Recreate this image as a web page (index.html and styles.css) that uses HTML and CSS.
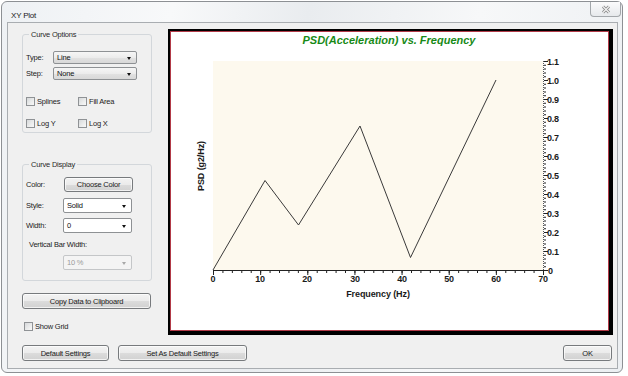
FILE: index.html
```html
<!DOCTYPE html>
<html>
<head>
<meta charset="utf-8">
<title>XY Plot</title>
<link rel="stylesheet" href="styles.css">
</head>
<body>
<div class="window">
  <div class="titlebar">
    <span class="title">XY Plot</span>
    <div class="close">
      <svg width="10" height="9" viewBox="0 0 10 9">
        <path d="M2 1.5 L8 7.5 M8 1.5 L2 7.5" stroke="#8a8a8a" stroke-width="3" fill="none"/>
        <path d="M2 1.5 L8 7.5 M8 1.5 L2 7.5" stroke="#f4f4f4" stroke-width="1.1" fill="none"/>
      </svg>
    </div>
  </div>
  <div class="client">
    <div class="main">
      <div class="left">
        <fieldset class="group g1">
          <legend>Curve Options</legend>
          <div class="row">
            <span class="lbl w27">Type:</span>
            <div class="combo dd w84"><span>Line</span><i class="arrow"></i></div>
          </div>
          <div class="row mt3">
            <span class="lbl w27">Step:</span>
            <div class="combo dd w84"><span>None</span><i class="arrow"></i></div>
          </div>
          <div class="row mt17">
            <label class="check w52"><i class="box"></i>Splines</label>
            <label class="check"><i class="box"></i>Fill Area</label>
          </div>
          <div class="row mt13">
            <label class="check w52"><i class="box"></i>Log Y</label>
            <label class="check"><i class="box"></i>Log X</label>
          </div>
        </fieldset>
        <fieldset class="group g2">
          <legend>Curve Display</legend>
          <div class="row">
            <span class="lbl w38">Color:</span>
            <button class="btn choose">Choose Color</button>
          </div>
          <div class="row mt6">
            <span class="lbl w37">Style:</span>
            <div class="combo tall w69"><span>Solid</span><i class="arrow"></i></div>
          </div>
          <div class="row mt5">
            <span class="lbl w37">Width:</span>
            <div class="combo tall w69"><span>0</span><i class="arrow"></i></div>
          </div>
          <div class="vbw">Vertical Bar Width:</div>
          <div class="row mt6">
            <span class="lbl w37"></span>
            <div class="combo tall w69 disabled"><span>10 %</span><i class="arrow"></i></div>
          </div>
        </fieldset>
        <button class="btn copy">Copy Data to Clipboard</button>
        <label class="check grid"><i class="box"></i>Show Grid</label>
      </div>
      <div class="chart">
        <div class="chart-inner">
          <svg class="plot" width="437" height="298" viewBox="171 32 437 298">
            <rect x="171" y="32" width="437" height="298" fill="#ffffff"/>
            <rect x="213" y="61" width="330" height="209" fill="#fdf9ee"/>
            <text x="389" y="44" class="ttl" text-anchor="middle">PSD(Acceleration) vs. Frequency</text>
            <!-- x axis -->
            <line x1="213" y1="270.5" x2="544" y2="270.5" stroke="#222" stroke-width="1"/>
            <line x1="213" y1="272" x2="544" y2="272" stroke="#222" stroke-width="2" stroke-dasharray="1 8.4286"/>
            <line x1="213" y1="273" x2="544" y2="273" stroke="#222" stroke-width="4" stroke-dasharray="1 46.143"/>
            <!-- y axis -->
            <line x1="543.5" y1="61" x2="543.5" y2="271" stroke="#555" stroke-width="1" stroke-dasharray="1 1"/>
            <line x1="545" y1="271" x2="545" y2="60" stroke="#222" stroke-width="2" stroke-dasharray="1 2.8"/>
            <line x1="546" y1="271" x2="546" y2="60" stroke="#222" stroke-width="4" stroke-dasharray="1 18"/>
            <g class="tick" text-anchor="middle">
              <text x="213" y="282">0</text>
              <text x="260" y="282">10</text>
              <text x="307" y="282">20</text>
              <text x="355" y="282">30</text>
              <text x="402" y="282">40</text>
              <text x="449" y="282">50</text>
              <text x="496" y="282">60</text>
              <text x="543" y="282">70</text>
            </g>
            <g class="tick">
              <text x="548" y="273.5">0</text>
              <text x="547" y="254.5">0.1</text>
              <text x="547" y="235.5">0.2</text>
              <text x="547" y="216.5">0.3</text>
              <text x="547" y="197.5">0.4</text>
              <text x="547" y="178.5">0.5</text>
              <text x="547" y="159.5">0.6</text>
              <text x="547" y="140.5">0.7</text>
              <text x="547" y="121.5">0.8</text>
              <text x="547" y="102.5">0.9</text>
              <text x="547" y="83.5">1.0</text>
              <text x="547" y="64.5">1.1</text>
            </g>
            <text x="378" y="297" class="axl" text-anchor="middle">Frequency (Hz)</text>
            <text class="axl" text-anchor="middle" transform="translate(204 166) rotate(-90)">PSD (g2/Hz)</text>
            <polyline points="213,270 265,180.5 298.5,225 360,126 410.5,257.5 496,80" fill="none" stroke="#3a3a3a" stroke-width="1"/>
          </svg>
        </div>
      </div>
    </div>
    <div class="bottom">
      <button class="btn defset">Default Settings</button>
      <button class="btn setdef">Set As Default Settings</button>
      <button class="btn ok">OK</button>
    </div>
  </div>
</div>
</body>
</html>
```
FILE: styles.css
```css
* { box-sizing: border-box; }
html, body { margin: 0; padding: 0; background: #ffffff; }
body {
  width: 628px; height: 376px; overflow: hidden;
  font-family: "Liberation Sans", Arial, sans-serif;
  font-size: 7.5px; letter-spacing: -0.2px; color: #1c1c1c;
}
.window {
  margin: 1px 0 0 1px;
  width: 622px; height: 372px;
  border: 1px solid #8d9094;
  border-radius: 6px;
  background: linear-gradient(100deg, #eef1f4 0%, #f8f9fa 25%, #e9ecef 45%, #f7f8f9 70%, #eceff2 100%);
  padding: 0 4px 3px 5px;
  display: flex; flex-direction: column;
}
.titlebar {
  height: 20px;
  display: flex; justify-content: space-between; align-items: flex-start;
  margin-right: -4px;
}
.title { font-size: 8px; padding: 9px 0 0 4px; color: #1a1a1a; }
.close {
  width: 31px; height: 15px;
  border: 1px solid #a3a7ab; border-top: none;
  border-radius: 0 0 4px 4px;
  background: linear-gradient(#fbfbfc, #e6e9ec);
  display: flex; align-items: center; justify-content: center;
  margin-right: 1px;
}
.close svg { display: block; }
.client {
  flex: 1;
  border: 1px solid #a9adb1;
  background: #f0f0f0;
  padding: 6px 4px 0 14px;
  display: flex; flex-direction: column;
}
.main { display: flex; }
.left { width: 130px; margin-right: 16px; display: flex; flex-direction: column; }
.group {
  margin: 0; padding: 0 0 0 3px;
  border: 1px solid #d3d7db; border-radius: 3px;
  min-width: 0;
}
.group legend {
  padding: 0 2px; margin-left: 3px;
  font-size: 7.5px; line-height: 9px; color: #2a2a2a;
}
.g1 { margin-top: 1px; height: 103px; padding-top: 12px; }
.g2 { margin-top: 27px; height: 121px; padding-top: 8px; }
.row { display: flex; align-items: center; }
.mt3 { margin-top: 3px; }
.mt5 { margin-top: 5px; }
.mt6 { margin-top: 6px; }
.mt13 { margin-top: 13px; }
.mt17 { margin-top: 17px; }
.lbl { display: block; }
.w27 { width: 27px; }
.w37 { width: 37px; }
.w38 { width: 38px; }
.w52 { width: 52px; }
.w69 { width: 69px; }
.w84 { width: 84px; }
.combo {
  position: relative;
  height: 13px;
  border: 1px solid #8e9194; border-radius: 2px;
  background: #ffffff;
  display: flex; align-items: center;
  padding-left: 3px;
  color: #111;
}
.combo.dd { background: linear-gradient(#f6f6f6 0%, #ececec 50%, #e2e2e2 51%, #d8d8d8 100%); }
.combo.tall { height: 15px; }
.combo.disabled { border-color: #c4c6c8; color: #9a9a9a; background: #f4f4f4; }
.arrow {
  position: absolute; right: 5px; top: 50%;
  margin-top: -1px;
  width: 0; height: 0;
  border-left: 2.5px solid transparent; border-right: 2.5px solid transparent;
  border-top: 3px solid #111;
}
.disabled .arrow { border-top-color: #a8a8a8; }
.check { display: flex; align-items: center; height: 9px; }
.box {
  display: block; width: 9px; height: 9px; margin-right: 2px;
  border: 1px solid #8f9295;
  background: linear-gradient(135deg, #d6d8da 0%, #eceded 60%, #f8f8f8 100%);
}
.vbw { margin-top: 7px; margin-left: 3px; line-height: 9px; }
.btn {
  font-family: inherit; font-size: 7.5px; letter-spacing: -0.2px; color: #1a1a1a;
  height: 16px; padding: 0;
  border: 1px solid #777a7d; border-radius: 3px;
  background: linear-gradient(#f3f3f3 0%, #ebebeb 50%, #dcdcdc 51%, #d1d1d1 100%);
  box-shadow: inset 0 0 0 1px rgba(255,255,255,0.7);
  display: flex; align-items: center; justify-content: center;
}
.choose { width: 69px; height: 15px; margin-left: 0; }
.copy { margin-top: 12px; width: 129px; }
.grid { margin-top: 13px; margin-left: 2px; }
.chart {
  flex: 1; height: 306px;
  border-style: solid; border-color: #000;
  border-width: 2px 4px 4px 2px;
}
.chart-inner { width: 100%; height: 100%; border: 1px solid #b23a48; }
.plot { display: block; }
.ttl { font-family: "Liberation Sans", Arial, sans-serif; font-size: 11px; font-weight: bold; font-style: italic; fill: #178a17; letter-spacing: 0; }
.tick text { font-family: "Liberation Sans", Arial, sans-serif; font-size: 9px; font-weight: bold; fill: #1a1a1a; letter-spacing: -0.2px; }
.axl { font-family: "Liberation Sans", Arial, sans-serif; font-size: 9px; font-weight: bold; fill: #1a1a1a; letter-spacing: -0.1px; }
.bottom { display: flex; margin-top: 10px; }
.defset { width: 87px; }
.setdef { width: 129px; margin-left: 9px; }
.ok { width: 49px; margin-left: auto; margin-right: 1px; }
```
